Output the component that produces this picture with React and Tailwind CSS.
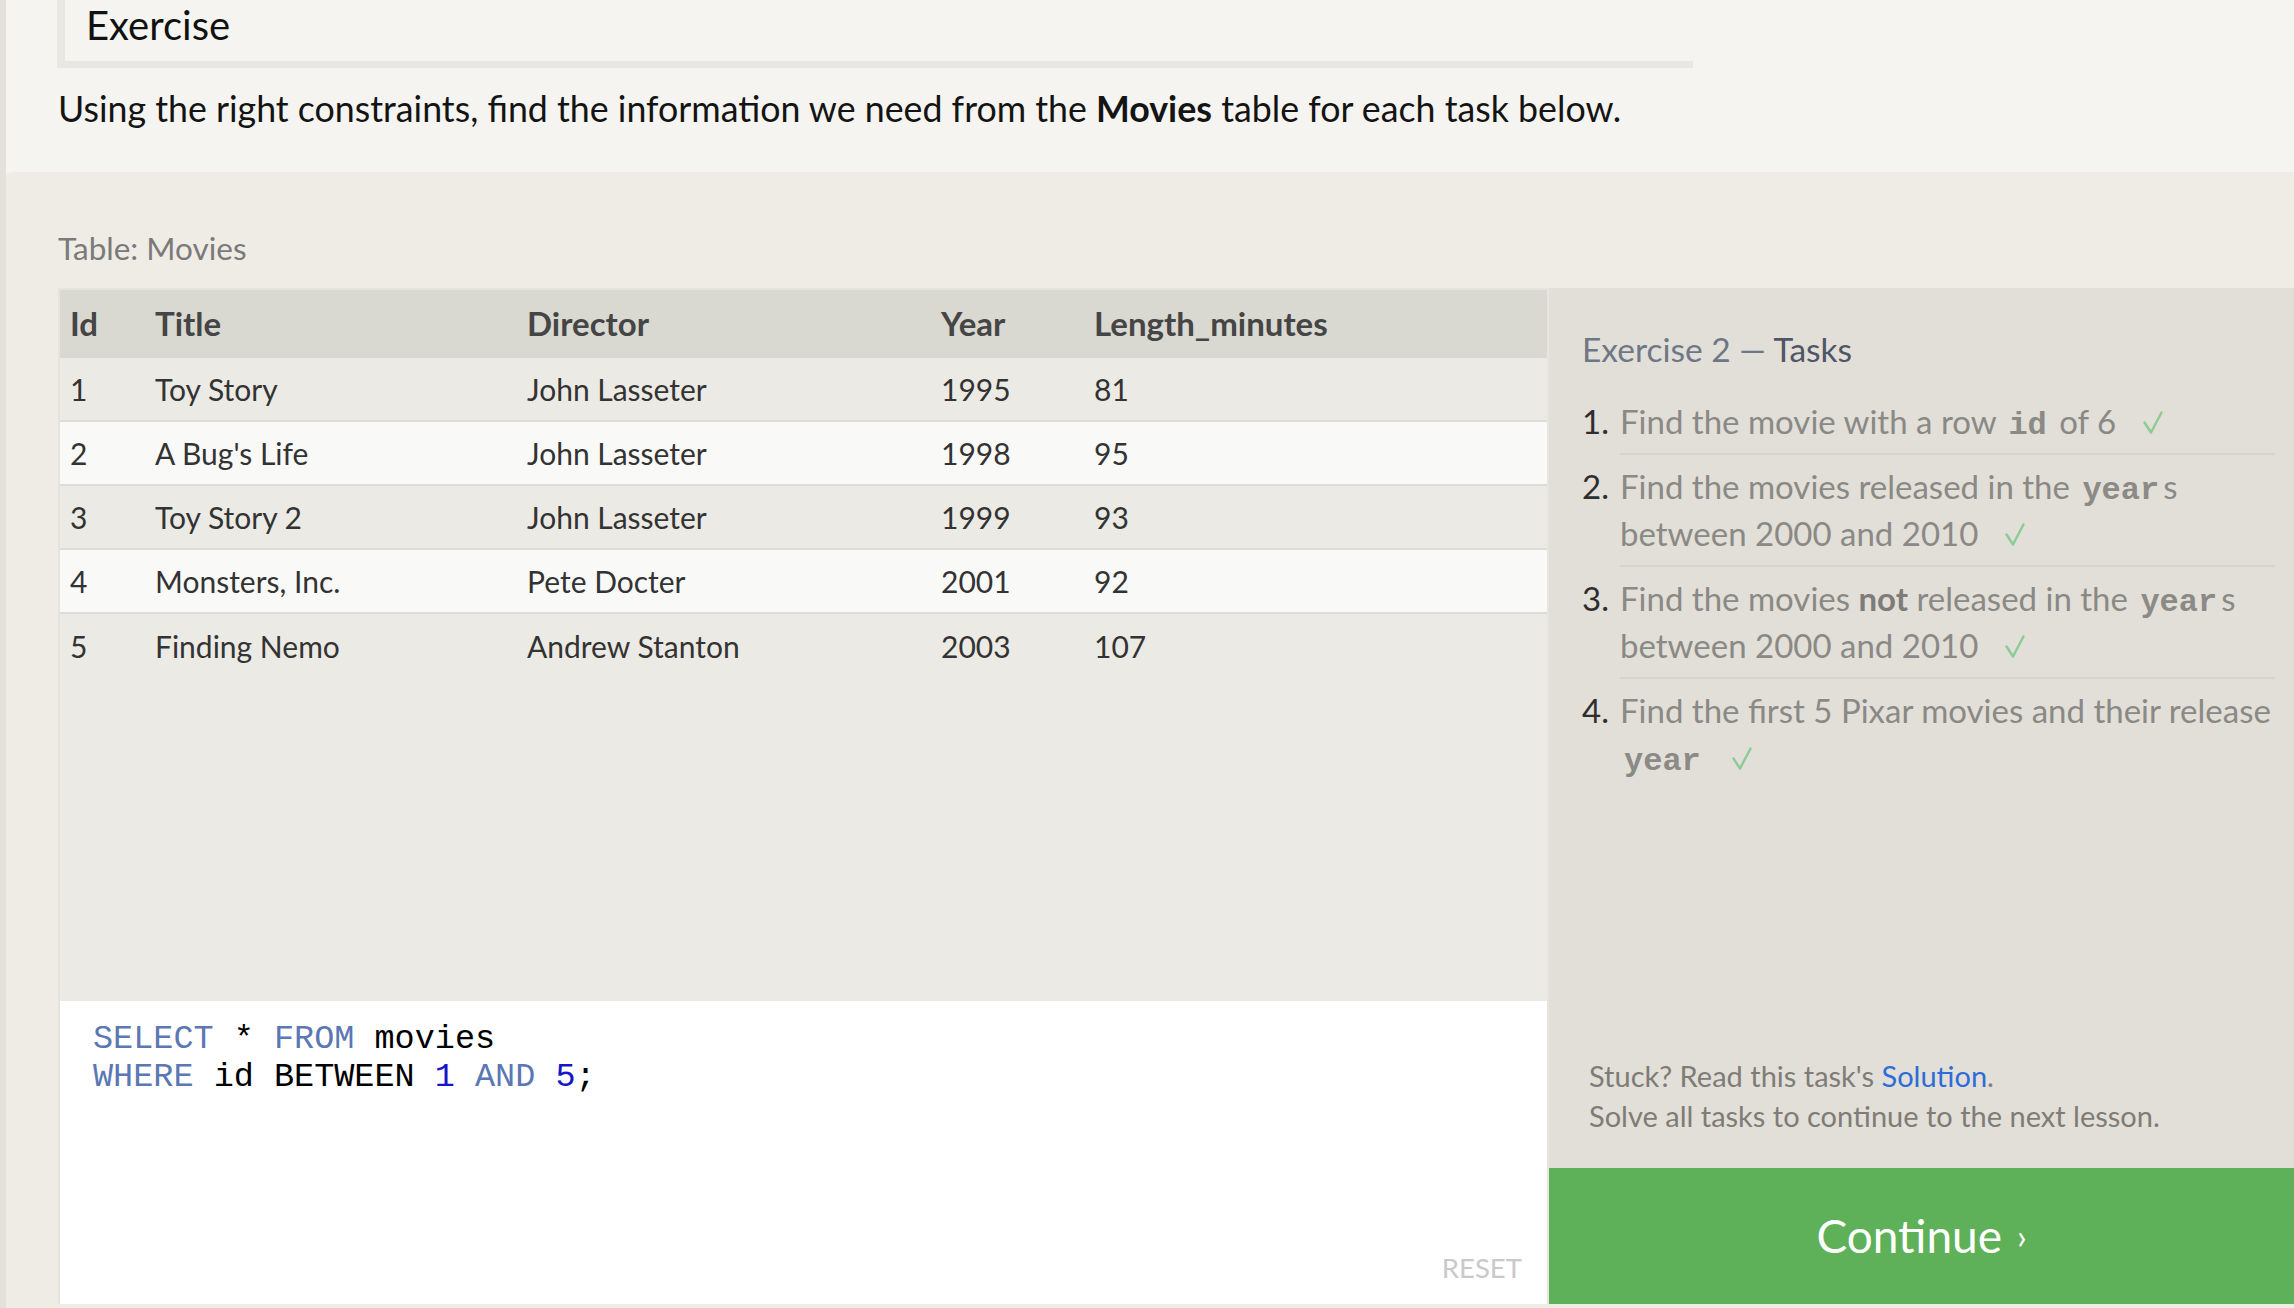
export default function App() {
  const rows = [
    ["1", "Toy Story", "John Lasseter", "1995", "81"],
    ["2", "A Bug's Life", "John Lasseter", "1998", "95"],
    ["3", "Toy Story 2", "John Lasseter", "1999", "93"],
    ["4", "Monsters, Inc.", "Pete Docter", "2001", "92"],
    ["5", "Finding Nemo", "Andrew Stanton", "2003", "107"],
  ];
  const Code = ({ children }) => (
    <code className="font-['Liberation_Mono','Courier_New',monospace] font-bold text-[32px] leading-none text-[#8b8a86] px-[4px]">
      {children}
    </code>
  );
  const Check = () => (
    <svg
      className="inline-block ml-[27px] align-baseline"
      width="20"
      height="23"
      viewBox="0 0 20 23"
      fill="none"
      stroke="#8ccb93"
      strokeWidth="2.4"
      strokeLinecap="round"
      strokeLinejoin="round"
    >
      <path d="M1.5 11.5 L8 21.5 L18.5 1.5" />
    </svg>
  );
  return (
    <div className="w-[2294px] h-[1308px] overflow-hidden flex bg-[#e4e1dc] font-['Lato','Liberation_Sans',sans-serif]">
      <div className="w-[6px] shrink-0" />
      <div className="flex-1 flex flex-col bg-[#f5f4f0] min-w-0">
        <div className="h-[172px] shrink-0">
          <div className="ml-[51px] w-[1636px] h-[68px] border-l-[8px] border-b-[7px] border-[#e9e8e0] pl-[21px] pt-[1px] text-[40px] leading-[48px] text-[#111]">
            Exercise
          </div>
          <p className="ml-[52px] mt-[20px] text-[35.75px] leading-[42px] text-[#141414]">
            Using the right constraints, find the information we need from the <b>Movies</b> table for each task below.
          </p>
        </div>
        <div className="flex-1 bg-[#efece6] rounded-tl-[6px] flex flex-col pl-[52px]">
          <div className="pt-[57px] text-[31.5px] leading-[38px] text-[#7a7a7a]">Table: Movies</div>
          <div className="mt-[21px] flex h-[1016px]">
            {/* left panel */}
            <div className="w-[1489px] shrink-0 flex flex-col border-l-2 border-t-2 border-[#e4e3dd]">
              <div className="grid grid-cols-[83px_372px_414px_153px_1fr] h-[68px] bg-[#d9d8d1] items-center text-[33px] font-bold text-[#454545]">
                <div className="pl-[10px]">Id</div>
                <div className="pl-[12px]">Title</div>
                <div className="pl-[12px]">Director</div>
                <div className="pl-[12px]">Year</div>
                <div className="pl-[12px]">Length_minutes</div>
              </div>
              {rows.map((r, i) => (
                <div
                  key={r[0]}
                  className={
                    "grid grid-cols-[83px_372px_414px_153px_1fr] h-[64px] items-center text-[30px] text-[#333] " +
                    (i % 2 === 0 ? "bg-[#ebeae4] " : "bg-[#f9f9f8] ") +
                    (i < rows.length - 1 ? "border-b-2 border-[#dedcd6]" : "")
                  }
                >
                  <div className="pl-[10px]">{r[0]}</div>
                  <div className="pl-[12px]">{r[1]}</div>
                  <div className="pl-[12px]">{r[2]}</div>
                  <div className="pl-[12px]">{r[3]}</div>
                  <div className="pl-[12px]">{r[4]}</div>
                </div>
              ))}
              <div className="flex-1 bg-[#ebeae4]" />
              <div className="h-[303px] bg-white flex flex-col">
                <pre className="pl-[33px] pt-[19px] font-['Liberation_Mono','Courier_New',monospace] text-[33.5px] leading-[38px] text-black">
                  <span className="text-[#5b77b4]">SELECT</span> * <span className="text-[#5b77b4]">FROM</span> movies{"\n"}
                  <span className="text-[#5b77b4]">WHERE</span> id BETWEEN <span className="text-[#1616c8]">1</span>{" "}
                  <span className="text-[#5b77b4]">AND</span> <span className="text-[#1616c8]">5</span>;
                </pre>
                <div className="mt-auto self-end pr-[25px] pb-[20px] text-[27.5px] leading-[33px] text-[#c9c9c9]">RESET</div>
              </div>
            </div>
            {/* right panel */}
            <div className="flex-1 bg-[#e1dfd8] border-l-2 border-[#e7e5df] flex flex-col">
              <div className="pl-[33px] pt-[41px] text-[33.5px] leading-[40px]">
                <span className="text-[#6f7787]">Exercise 2 — </span>
                <span className="text-[#4f5666]">Tasks</span>
              </div>
              <ol className="pl-[33px] pr-[19px] mt-[29px] text-[33px] leading-[47px] text-[#8a8985]">
                <li className="flex">
                  <span className="w-[38px] shrink-0 text-[#2e2e2e]">1.</span>
                  <div className="flex-1 pb-[8px] border-b-2 border-[#d6d4cb] whitespace-nowrap">
                    Find the movie with a row <Code>id</Code> of 6<Check />
                  </div>
                </li>
                <li className="flex mt-[8px]">
                  <span className="w-[38px] shrink-0 text-[#2e2e2e]">2.</span>
                  <div className="flex-1 pb-[8px] border-b-2 border-[#d6d4cb] whitespace-nowrap">
                    Find the movies released in the <Code>year</Code>s
                    <br />
                    between 2000 and 2010<Check />
                  </div>
                </li>
                <li className="flex mt-[8px]">
                  <span className="w-[38px] shrink-0 text-[#2e2e2e]">3.</span>
                  <div className="flex-1 pb-[8px] border-b-2 border-[#d6d4cb] whitespace-nowrap">
                    Find the movies <b className="text-[#7d7c78]">not</b> released in the <Code>year</Code>s
                    <br />
                    between 2000 and 2010<Check />
                  </div>
                </li>
                <li className="flex mt-[8px]">
                  <span className="w-[38px] shrink-0 text-[#2e2e2e]">4.</span>
                  <div className="flex-1 whitespace-nowrap">
                    Find the first 5 Pixar movies and their release
                    <br />
                    <Code>year</Code>
                    <Check />
                  </div>
                </li>
              </ol>
              <div className="mt-auto pl-[40px] pb-[32px] text-[29px] leading-[40px] text-[#7f7c77]">
                <div>
                  Stuck? Read this task's <span className="text-[#2e6cd9]">Solution</span>.
                </div>
                <div>Solve all tasks to continue to the next lesson.</div>
              </div>
              <div className="h-[136px] bg-[#5eb159] flex items-center justify-center text-white">
                <span className="text-[46px] leading-none">Continue</span>
                <span className="text-[34px] leading-none ml-[15px]">›</span>
              </div>
            </div>
          </div>
        </div>
      </div>
    </div>
  );
}
